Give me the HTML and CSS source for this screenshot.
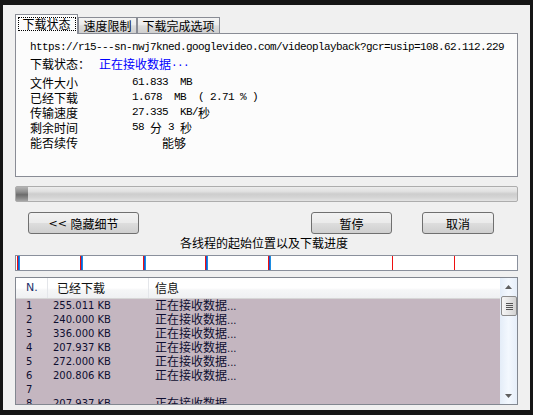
FILE: index.html
```html
<!DOCTYPE html>
<html lang="zh-CN">
<head>
<meta charset="utf-8">
<title>下载状态</title>
<link rel="stylesheet" href="styles.css">
</head>
<body>
<div class="window">
  <div class="tabs">
    <div class="tab sel"><span class="focus">下载状态</span></div>
    <div class="tab t2">速度限制</div>
    <div class="tab t3">下载完成选项</div>
  </div>
  <div class="panel">
    <div class="line url"><span class="m">https://r15---sn-nwj7kned.googlevideo.com/videoplayback?gcr=usip=108.62.112.229</span></div>
    <div class="line status"><span class="c">下载状态：</span><span class="c blue gap">正在接收数据</span><span class="m blue">...</span></div>
    <div class="line"><span class="c lbl">文件大小</span><span class="m">61.833  MB</span></div>
    <div class="line"><span class="c lbl">已经下载</span><span class="m">1.678  MB  ( 2.71 % )</span></div>
    <div class="line"><span class="c lbl">传输速度</span><span class="m">27.335  KB/</span><span class="c">秒</span></div>
    <div class="line"><span class="c lbl">剩余时间</span><span class="m">58 </span><span class="c">分</span><span class="m"> 3 </span><span class="c">秒</span></div>
    <div class="line"><span class="c lbl">能否续传</span><span class="m">     </span><span class="c">能够</span></div>
  </div>
  <div class="progress"><div class="chunk"></div></div>
  <div class="buttons">
    <div class="btn b1"><span class="lt">&lt;&lt; </span>隐藏细节</div>
    <div class="btn b2">暂停</div>
    <div class="btn b3">取消</div>
  </div>
  <div class="caption">各线程的起始位置以及下载进度</div>
  <div class="threads">
    <div class="seg w63"><i class="mk"></i><i class="pg"></i></div>
    <div class="seg w63"><i class="mk"></i><i class="pg"></i></div>
    <div class="seg w62"><i class="mk"></i><i class="pg"></i></div>
    <div class="seg w63"><i class="mk"></i><i class="pg"></i></div>
    <div class="seg w62"><i class="mk"></i><i class="pg"></i></div>
    <div class="seg w62"></div>
    <div class="seg w62"><i class="mk"></i></div>
    <div class="seg last"><i class="mk"></i></div>
  </div>
  <div class="list">
    <div class="lv">
      <div class="lv-head">
        <div class="col c1 hn">N.</div>
        <div class="col c2 hc">已经下载</div>
        <div class="col c3 hc">信息</div>
      </div>
      <div class="lv-row"><span class="c1">1</span><span class="c2">255.011 KB</span><span class="c3"><span class="cj">正在接收数据</span><span>...</span></span></div>
      <div class="lv-row"><span class="c1">2</span><span class="c2">240.000 KB</span><span class="c3"><span class="cj">正在接收数据</span><span>...</span></span></div>
      <div class="lv-row"><span class="c1">3</span><span class="c2">336.000 KB</span><span class="c3"><span class="cj">正在接收数据</span><span>...</span></span></div>
      <div class="lv-row"><span class="c1">4</span><span class="c2">207.937 KB</span><span class="c3"><span class="cj">正在接收数据</span><span>...</span></span></div>
      <div class="lv-row"><span class="c1">5</span><span class="c2">272.000 KB</span><span class="c3"><span class="cj">正在接收数据</span><span>...</span></span></div>
      <div class="lv-row"><span class="c1">6</span><span class="c2">200.806 KB</span><span class="c3"><span class="cj">正在接收数据</span><span>...</span></span></div>
      <div class="lv-row"><span class="c1">7</span><span class="c2"></span><span class="c3"></span></div>
      <div class="lv-row"><span class="c1">8</span><span class="c2">207.937 KB</span><span class="c3"><span class="cj">正在接收数据</span><span>...</span></span></div>
    </div>
    <div class="sb">
      <div class="sb-btn"><svg width="7" height="4" viewBox="0 0 7 4"><path d="M0 4 L3.5 0 L7 4 Z" fill="#5f5f5f"/></svg></div>
      <div class="sb-thumb"><i class="grip"></i><i class="grip"></i><i class="grip"></i><i class="grip"></i></div>
      <div class="sb-track"></div>
      <div class="sb-btn"><svg width="7" height="4" viewBox="0 0 7 4"><path d="M0 0 L7 0 L3.5 4 Z" fill="#5f5f5f"/></svg></div>
    </div>
  </div>
</div>
</body>
</html>
```

FILE: styles.css
```css
* { box-sizing: border-box; }
html, body { margin: 0; padding: 0; }
body {
  width: 533px;
  height: 415px;
  overflow: hidden;
  background: #151515;
  font-family: "Noto Sans CJK SC", sans-serif;
  font-size: 12px;
  color: #000;
}
.window {
  margin: 5px 3px 0 3px;
  height: 405px;
  background: #f0f0f0;
  display: flex;
  flex-direction: column;
  padding: 9px 12px 5px 12px;
}

/* tabs */
.tabs { display: flex; align-items: flex-end; height: 19px; flex: none; }
.tab {
  height: 16px;
  border: 1px solid #898c95;
  border-bottom: none;
  background: linear-gradient(#f4f4f4, #ebebeb 45%, #dddddd 52%, #cfcfcf);
  display: flex;
  align-items: center;
  justify-content: center;
  font-size: 12px;
  line-height: 14px;
}
.tab.sel {
  width: 63px;
  height: 20px;
  margin-bottom: -1px;
  background: #fcfcfc;
  position: relative;
  z-index: 1;
  align-items: flex-start;
  padding-top: 2px;
}
.tab.t2 { width: 59px; }
.tab.t3 { width: 83px; }
.focus {
  width: 58px;
  height: 14px;
  border: 1px dotted #000;
  display: flex;
  align-items: center;
  justify-content: center;
}

/* panel */
.panel {
  flex: none;
  height: 144px;
  border: 1px solid #898c95;
  background: #fcfcfc;
  padding: 6px 14px 0 14px;
}
.line { display: flex; align-items: center; height: 15px; line-height: 15px; white-space: pre; }
.url { margin-bottom: 1px; }
.status { margin-bottom: 4px; }
.m { font-family: "Liberation Mono", monospace; font-size: 11px; letter-spacing: -0.6px; }
.c { font-family: "Noto Sans CJK SC", sans-serif; font-size: 12px; }
.lbl { width: 102px; }
.blue { color: #0000ff; }
.gap { margin-left: 9px; }

/* progress */
.progress {
  flex: none;
  margin-top: 9px;
  height: 16px;
  border: 1px solid #adadad;
  border-radius: 2px;
  background: linear-gradient(#ececec, #e2e2e2 30%, #cdcdcd 50%, #d5d5d5 75%, #e3e3e3);
  display: flex;
}
.chunk {
  width: 12px;
  background: linear-gradient(#b4b4b4, #8e8e8e 35%, #6c6c6c 55%, #8a8a8a 80%, #a6a6a6);
}

/* buttons */
.buttons { flex: none; margin-top: 10px; height: 22px; display: flex; padding: 0 24px 0 13px; }
.btn {
  height: 22px;
  border: 1px solid #707070;
  border-radius: 3px;
  background: linear-gradient(#f2f2f2, #ebebeb 48%, #dddddd 52%, #cfcfcf);
  display: flex;
  align-items: center;
  justify-content: center;
  font-size: 12px;
  white-space: pre;
}
.b1 { width: 111px; }
.b2 { width: 81px; margin-left: auto; }
.b3 { width: 72px; margin-left: 30px; }
.lt { font-family: "DejaVu Sans", sans-serif; font-size: 11px; }

.caption { flex: none; margin-top: 1px; height: 16px; line-height: 16px; text-align: center; padding-right: 5px; }

/* thread bar */
.threads {
  flex: none;
  margin-top: 4px;
  height: 16px;
  border: 1px solid #8a909c;
  background: #fff;
  display: flex;
}
.seg { flex: none; display: flex; padding-left: 1px; }
.w63 { width: 63px; }
.w62 { width: 62px; }
.seg.last { flex: 1; }
.mk { width: 1px; background: #ee1010; }
.pg { width: 2px; background: linear-gradient(to right, #1440d0, #1fa6e6); }

/* list */
.list {
  flex: none;
  margin-top: 6px;
  height: 128px;
  border: 1px solid #828790;
  display: flex;
  background: #fff;
}
.lv {
  flex: 1;
  display: flex;
  flex-direction: column;
  overflow: hidden;
  background: #c4b6c0;
}
.lv-head {
  flex: none;
  height: 21px;
  display: flex;
  background: linear-gradient(#ffffff, #ffffff 50%, #f5f6f7 60%, #eff0f2);
  border-bottom: 1px solid #d6d6d6;
}
.col { display: flex; align-items: center; border-right: 1px solid #e4e6ea; line-height: 16px; }
.col.c3 { border-right: none; }
.c1 { width: 32px; padding-left: 10px; flex: none; }
.c2 { width: 101px; padding-left: 5px; flex: none; }
.c3 { flex: 1; padding-left: 6px; }
.hn { font-family: "DejaVu Sans", sans-serif; font-size: 11px; color: #1e2f6a; }
.hc { padding-left: 9px; font-size: 12px; color: #111; }
.col.c3.hc { padding-left: 6px; }
.lv-row {
  flex: none;
  height: 14px;
  line-height: 14px;
  display: flex;
  align-items: center;
  font-family: "DejaVu Sans", sans-serif;
  font-size: 10px;
  color: #0e0e30;
  white-space: pre;
}
.cj { font-family: "Noto Sans CJK SC", sans-serif; font-size: 12px; line-height: 14px; }

/* scrollbar */
.sb {
  width: 17px;
  flex: none;
  display: flex;
  flex-direction: column;
  background: linear-gradient(to right, #e4edf8, #f3f8fe 50%, #e6eef9);
}
.sb-btn { height: 17px; flex: none; display: flex; align-items: center; justify-content: center; }
.sb-thumb {
  flex: none;
  height: 20px;
  margin: 1px 0 0 1px;
  border: 1px solid #8c8c8c;
  border-radius: 2px;
  background: linear-gradient(to right, #f6f6f6, #e6e6e6 50%, #d2d2d2);
  display: flex;
  flex-direction: column;
  align-items: center;
  justify-content: center;
  gap: 1px;
}
.grip { width: 7px; height: 1px; background: #555; }
.sb-track { flex: 1; }
```
